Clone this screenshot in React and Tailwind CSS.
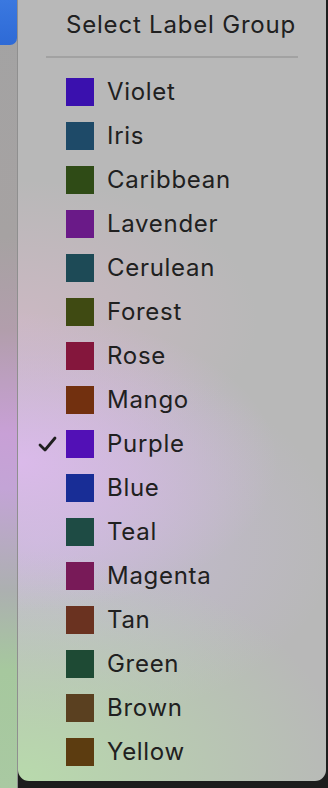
const labels = [
  { name: 'Violet', color: '#3a10ae' },
  { name: 'Iris', color: '#1e4a68' },
  { name: 'Caribbean', color: '#2f4b16' },
  { name: 'Lavender', color: '#6a1a88' },
  { name: 'Cerulean', color: '#1d4a56' },
  { name: 'Forest', color: '#3f4a12' },
  { name: 'Rose', color: '#84163c' },
  { name: 'Mango', color: '#72300f' },
  { name: 'Purple', color: '#5210b6', checked: true },
  { name: 'Blue', color: '#182d96' },
  { name: 'Teal', color: '#1e4b44' },
  { name: 'Magenta', color: '#781a58' },
  { name: 'Tan', color: '#6a3220' },
  { name: 'Green', color: '#1e4a34' },
  { name: 'Brown', color: '#5a4020' },
  { name: 'Yellow', color: '#5c3c10' },
]

function Check() {
  return (
    <svg width="20" height="18" viewBox="0 0 20 18" className="block shrink-0">
      <polyline points="2,10 7,15 17,3" fill="none" stroke="#1f1f1f" strokeWidth="2.8" strokeLinecap="round" strokeLinejoin="round" />
    </svg>
  )
}

export default function App() {
  return (
    <div className="w-[328px] h-[788px] overflow-hidden flex bg-[#1d1d1d] font-['Inter',sans-serif]">

      {/* left strip behind the menu */}
      <div className="w-[18px] shrink-0 h-full flex flex-col bg-[linear-gradient(to_bottom,#a3a3a3_0%,#a6a2a2_30%,#b29eac_42%,#c8a0d6_55%,#c3a4d6_62%,#acb0b0_75%,#a6c89e_85%,#a9c9a2_100%)] border-r border-[#8f8f8f]">
        <div className="h-[45px] w-[17px] rounded-br-[7px] bg-[linear-gradient(to_bottom,#3a78e0,#2e6ad6)]" />
      </div>

      {/* menu */}
      <div className="w-[308px] shrink-0 flex flex-col">
        <div className="h-[781px] rounded-b-[11px] flex flex-col bg-[#b8b8b8] bg-[radial-gradient(ellipse_260px_150px_at_0px_462px,rgba(220,186,236,0.95),rgba(220,186,236,0)_100%),radial-gradient(ellipse_240px_140px_at_0px_320px,rgba(206,184,196,0.85),rgba(206,184,196,0)_100%),radial-gradient(ellipse_330px_230px_at_0px_781px,rgba(184,218,172,1),rgba(184,218,172,0.6)_40%,rgba(184,218,172,0)_100%),radial-gradient(ellipse_300px_190px_at_20px_540px,rgba(204,188,226,0.7),rgba(204,188,226,0)_100%)]">
          <div className="h-[50px] flex items-center pl-[48px] text-[24px] text-[#202020] tracking-[0.8px]">
            Select Label Group
          </div>
          <div className="ml-[28px] mr-[28px] mt-[6px] h-[2px] bg-[#a2a2a2]" />
          <div className="flex flex-col pt-[12px]">
            {labels.map(l => (
              <div key={l.name} className="h-[44px] flex items-center">
                <div className="w-[48px] shrink-0 flex items-center pl-[20px]">
                  {l.checked && <Check />}
                </div>
                <div className="w-[28px] h-[28px] shrink-0" style={{ backgroundColor: l.color }} />
                <span className="ml-[13px] text-[24px] text-[#202020] tracking-[0.7px]">{l.name}</span>
              </div>
            ))}
          </div>
        </div>
        <div className="flex-1 bg-[#1d1d1d]" />
      </div>

      <div className="w-[2px] shrink-0 h-full bg-[#1d1d1d]" />
    </div>
  )
}
